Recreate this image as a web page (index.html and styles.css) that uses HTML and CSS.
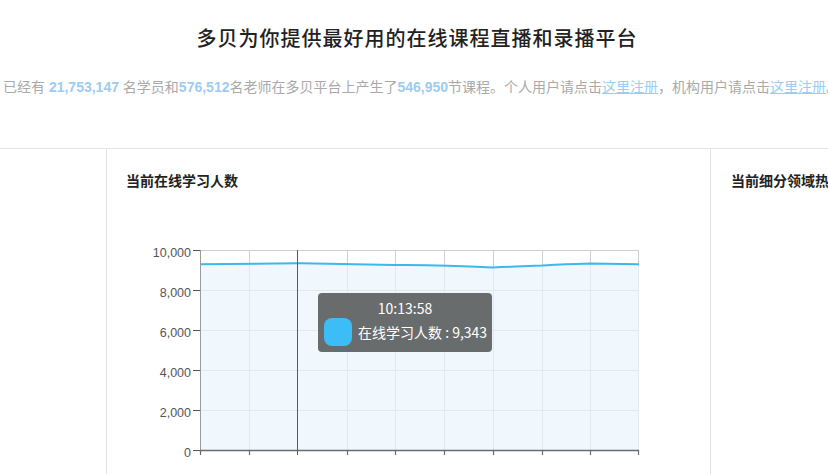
FILE: index.html
```html
<!DOCTYPE html>
<html lang="zh-CN">
<head>
<meta charset="utf-8">
<title>多贝</title>
<link rel="stylesheet" href="styles.css">
</head>
<body>
<header class="hero">
  <h1 class="hero-title">多贝为你提供最好用的在线课程直播和录播平台</h1>
  <p class="hero-stats">已经有 <b class="num">21,753,147</b> 名学员和<b class="num">576,512</b>名老师在多贝平台上产生了<b class="num">546,950</b>节课程。个人用户请点击<a class="reg" href="#">这里注册</a>，机构用户请点击<a class="reg" href="#">这里注册</a>。</p>
</header>
<section class="cards">
  <div class="card card-side"></div>
  <div class="card card-main">
    <h2 class="card-title">当前在线学习人数</h2>
    <div class="chart">
      <svg class="chart-svg" width="603" height="290" viewBox="0 0 603 290">
        <g transform="translate(-107 -190)">
          <g stroke="#cfcfcf" stroke-width="1" fill="none">
            <line x1="200" y1="250.5" x2="639" y2="250.5"/>
            <line x1="200" y1="290.5" x2="639" y2="290.5"/>
            <line x1="200" y1="330.5" x2="639" y2="330.5"/>
            <line x1="200" y1="370.5" x2="639" y2="370.5"/>
            <line x1="200" y1="410.5" x2="639" y2="410.5"/>
            <line x1="249.5" y1="250" x2="249.5" y2="450"/>
            <line x1="347.5" y1="250" x2="347.5" y2="450"/>
            <line x1="395.5" y1="250" x2="395.5" y2="450"/>
            <line x1="444.5" y1="250" x2="444.5" y2="450"/>
            <line x1="493.5" y1="250" x2="493.5" y2="450"/>
            <line x1="542.5" y1="250" x2="542.5" y2="450"/>
            <line x1="590.5" y1="250" x2="590.5" y2="450"/>
            <line x1="638.5" y1="250" x2="638.5" y2="450"/>
          </g>
          <path d="M200,264.2 C225,264.1 250,264 298,263.2 C320,263.6 340,264 395,265 C420,264.8 440,264.6 493,267.5 C515,266.8 530,265.8 542,265.5 C560,264.6 575,263.6 590,263.4 C610,263.6 625,264 639,264.2 L639,450 L200,450 Z" fill="rgba(233,245,254,0.69)"/>
          <path d="M200,264.2 C225,264.1 250,264 298,263.2 C320,263.6 340,264 395,265 C420,264.8 440,264.6 493,267.5 C515,266.8 530,265.8 542,265.5 C560,264.6 575,263.6 590,263.4 C610,263.6 625,264 639,264.2" fill="none" stroke="#3db7f0" stroke-width="2" stroke-linejoin="round"/>
          <line x1="200.5" y1="250" x2="200.5" y2="451" stroke="#9a9a9a" stroke-width="1"/>
          <line x1="200" y1="450.5" x2="639" y2="450.5" stroke="#6b6b6b" stroke-width="1.6"/>
          <g stroke="#555" stroke-width="1">
            <line x1="193" y1="250.5" x2="200" y2="250.5"/>
            <line x1="193" y1="290.5" x2="200" y2="290.5"/>
            <line x1="193" y1="330.5" x2="200" y2="330.5"/>
            <line x1="193" y1="370.5" x2="200" y2="370.5"/>
            <line x1="193" y1="410.5" x2="200" y2="410.5"/>
            <line x1="193" y1="450.5" x2="200" y2="450.5"/>
          </g>
          <g stroke="#6b6b6b" stroke-width="1.2">
            <line x1="200.5" y1="450" x2="200.5" y2="455"/>
            <line x1="249.5" y1="450" x2="249.5" y2="455"/>
            <line x1="347.5" y1="450" x2="347.5" y2="455"/>
            <line x1="395.5" y1="450" x2="395.5" y2="455"/>
            <line x1="444.5" y1="450" x2="444.5" y2="455"/>
            <line x1="493.5" y1="450" x2="493.5" y2="455"/>
            <line x1="542.5" y1="450" x2="542.5" y2="455"/>
            <line x1="590.5" y1="450" x2="590.5" y2="455"/>
            <line x1="638.5" y1="450" x2="638.5" y2="455"/>
          </g>
          <line x1="297.5" y1="250" x2="297.5" y2="455" stroke="#5a5a5a" stroke-width="1"/>
          <g class="ylab" text-anchor="end">
            <text x="191" y="256.5">10,000</text>
            <text x="191" y="296.5">8,000</text>
            <text x="191" y="336.5">6,000</text>
            <text x="191" y="376.5">4,000</text>
            <text x="191" y="416.5">2,000</text>
            <text x="191" y="456.5">0</text>
          </g>
        </g>
      </svg>
      <div class="tooltip">
        <div class="tt-time">10:13:58</div>
        <div class="tt-row"><span class="tt-swatch"></span><span class="tt-text">在线学习人数 : 9,343</span></div>
      </div>
    </div>
  </div>
  <div class="card card-right">
    <h2 class="card-title">当前细分领域热门课程</h2>
  </div>
</section>
</body>
</html>
```
FILE: styles.css
```css
html, body {
  margin: 0;
  padding: 0;
  background: #fff;
  overflow: hidden;
}
body {
  width: 828px;
  height: 474px;
  font-family: "Liberation Sans", "Noto Sans CJK SC", sans-serif;
}
.hero {
  padding-top: 24px;
}
.hero-title {
  margin: 0;
  padding-left: 6px;
  text-align: center;
  font-family: "Noto Sans CJK SC", sans-serif;
  font-size: 20px;
  line-height: 28px;
  font-weight: 500;
  letter-spacing: 1px;
  color: #222;
}
.hero-stats {
  margin: 25px 0 0;
  padding-left: 3px;
  white-space: nowrap;
  overflow: hidden;
  font-size: 14px;
  line-height: 20px;
  color: #a9a9a9;
}
.num {
  color: #9dcbf4;
  font-weight: bold;
}
.reg {
  color: #9dcbf4;
  text-decoration: underline;
}
.cards {
  margin-top: 51px;
  display: flex;
  border-top: 1px solid #e3e3e3;
  height: 330px;
}
.card {
  box-sizing: border-box;
  flex: none;
}
.card-side {
  width: 106px;
}
.card-main {
  width: 604px;
  border-left: 1px solid #e3e3e3;
}
.card-right {
  width: 200px;
  border-left: 1px solid #e3e3e3;
  padding-left: 20px;
  overflow: hidden;
}
.card-title {
  margin: 0;
  padding-top: 21px;
  font-family: "Noto Sans CJK SC", sans-serif;
  font-size: 14px;
  line-height: 20px;
  font-weight: bold;
  color: #222;
  white-space: nowrap;
}
.card-main .card-title {
  padding-left: 19px;
}
.chart {
  position: relative;
  width: 603px;
  height: 290px;
}
.chart-svg {
  display: block;
}
.ylab text {
  font-family: "Liberation Sans", sans-serif;
  font-size: 12.5px;
  fill: #555;
}
.tooltip {
  position: absolute;
  left: 211px;
  top: 103px;
  width: 174px;
  height: 59px;
  box-sizing: border-box;
  padding: 6px 6px;
  background: #696c6c;
  border-radius: 4px;
  color: #fff;
  font-family: "Noto Sans CJK SC", sans-serif;
  font-size: 14px;
}
.tt-time {
  text-align: center;
  line-height: 18px;
}
.tt-row {
  display: flex;
  align-items: center;
  margin-top: 1px;
  gap: 6px;
}
.tt-swatch {
  width: 28px;
  height: 28px;
  border-radius: 8px;
  background: #3dbdf5;
  flex: none;
}
.tt-text {
  line-height: 20px;
  white-space: nowrap;
}
```
